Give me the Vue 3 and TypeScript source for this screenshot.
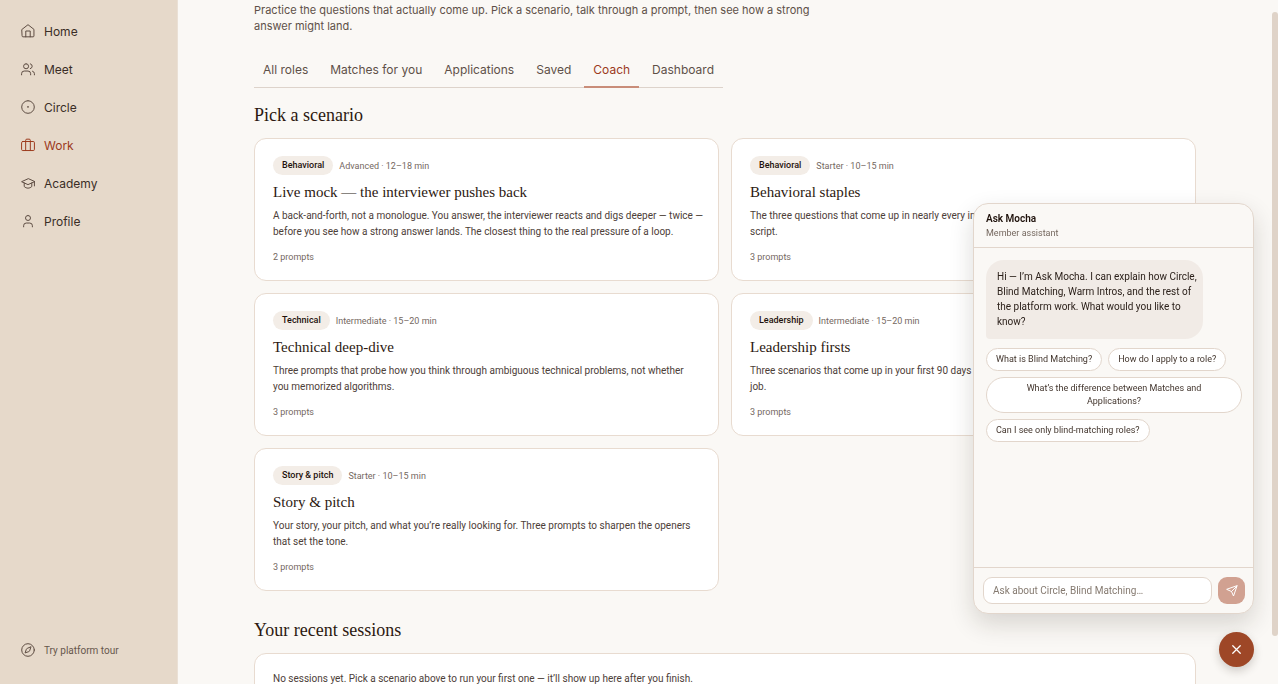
<script setup lang="ts">
import { ref } from 'vue'

interface NavItem { label: string; icon: string }
interface Scenario { category: string; meta: string; title: string; text: string; prompts: string }

const nav: NavItem[] = [
  { label: 'Home', icon: 'M1.800 9.200 12 1.200l10.200 8V20.500a1.500 1.500 0 0 1-1.500 1.500H3.300a1.500 1.500 0 0 1-1.500-1.500zM8.200 22V12h7.600v10' },
  { label: 'Meet', icon: 'M16.500 22v-2a4.500 4.500 0 0 0-4.500-4.500H5.500A4.500 4.500 0 0 0 1 20v2M8.700 3a4.300 4.300 0 1 0 0 8.600a4.300 4.300 0 0 0 0-8.600M23 22v-2a4.500 4.500 0 0 0-3.300-4.300M16 3.100a4.300 4.300 0 0 1 0 8.300' },
  { label: 'Circle', icon: 'M12 1.200a10.800 10.800 0 1 0 0 21.600a10.800 10.800 0 0 0 0-21.600M12 11.300a.7.7 0 1 0 0 1.400a.7.7 0 0 0 0-1.400' },
  { label: 'Work', icon: 'M3 6h18a2 2 0 0 1 2 2v11.500a2 2 0 0 1-2 2H3a2 2 0 0 1-2-2V8a2 2 0 0 1 2-2zM16 21.500V4a2 2 0 0 0-2-2h-4a2 2 0 0 0-2 2v17.500' },
  { label: 'Academy', icon: 'M12 4.800 1 9.800l11 5 11-5zM23 9.800V17M5.500 12v6c2 2 4.200 2.800 6.500 2.800s4.500-.8 6.500-2.800v-6' },
  { label: 'Profile', icon: 'M19.500 22v-2a4.500 4.500 0 0 0-4.500-4.500H9A4.500 4.500 0 0 0 4.500 20v2M12 2.500a4.300 4.300 0 1 0 0 8.600a4.300 4.300 0 0 0 0-8.600' },
]
const tabs: string[] = ['All roles', 'Matches for you', 'Applications', 'Saved', 'Coach', 'Dashboard']
const activeTab = ref('Coach')

const scenarios: Scenario[] = [
  { category: 'Behavioral', meta: 'Advanced · 12–18 min', title: 'Live mock — the interviewer pushes back', text: 'A back-and-forth, not a monologue. You answer, the interviewer reacts and digs deeper — twice —\nbefore you see how a strong answer lands. The closest thing to the real pressure of a loop.', prompts: '2 prompts' },
  { category: 'Behavioral', meta: 'Starter · 10–15 min', title: 'Behavioral staples', text: 'The three questions that come up in nearly every interview. Sound prepared without following a\nscript.', prompts: '3 prompts' },
  { category: 'Technical', meta: 'Intermediate · 15–20 min', title: 'Technical deep-dive', text: 'Three prompts that probe how you think through ambiguous technical problems, not whether\nyou memorized algorithms.', prompts: '3 prompts' },
  { category: 'Leadership', meta: 'Intermediate · 15–20 min', title: 'Leadership firsts', text: 'Three scenarios that come up in your first 90 days managing people in a new leadership\njob.', prompts: '3 prompts' },
  { category: 'Story & pitch', meta: 'Starter · 10–15 min', title: 'Story & pitch', text: 'Your story, your pitch, and what you’re really looking for. Three prompts to sharpen the openers\nthat set the tone.', prompts: '3 prompts' },
]
const greeting = 'Hi — I’m Ask Mocha. I can explain how Circle,\nBlind Matching, Warm Intros, and the rest of\nthe platform work. What would you like to\nknow?'
const suggestions: string[] = [
  'What is Blind Matching?',
  'How do I apply to a role?',
  'What’s the difference between Matches and\nApplications?',
  'Can I see only blind-matching roles?',
]
const question = ref('')
</script>

<template>
  <div class="app">
    <aside class="sidebar">
      <nav class="nav" aria-label="Main">
        <a v-for="item in nav" :key="item.label" href="#" class="nav-link" :class="{ active: item.label === 'Work' }">
          <svg class="icon" viewBox="0 0 24 24" aria-hidden="true"><path :d="item.icon" /></svg>
          <span>{{ item.label }}</span>
        </a>
      </nav>
      <button type="button" class="tour">
        <svg class="icon" viewBox="0 0 24 24" aria-hidden="true">
          <circle cx="12" cy="12" r="10.800" />
          <path d="m17 7-2.200 6.300a2.500 2.500 0 0 1-1.500 1.500L7 17l2.200-6.300a2.500 2.500 0 0 1 1.500-1.500z" />
        </svg>
        <span>Try platform tour</span>
      </button>
    </aside>

    <main class="main">
      <div class="content">
        <p class="intro">Practice the questions that actually come up. Pick a scenario, talk through a prompt, then see how a strong answer might land.</p>
        <div class="tabs" role="tablist">
          <button v-for="tab in tabs" :key="tab" type="button" role="tab" class="tab" :class="{ active: tab === activeTab }" :aria-selected="tab === activeTab" @click="activeTab = tab">{{ tab }}</button>
        </div>
        <h2 class="heading">Pick a scenario</h2>
        <div class="grid">
          <button v-for="s in scenarios" :key="s.title" type="button" class="card">
            <span class="tags"><span class="pill">{{ s.category }}</span><span class="meta">{{ s.meta }}</span></span>
            <span class="title">{{ s.title }}</span>
            <span class="text">{{ s.text }}</span>
            <span class="prompts">{{ s.prompts }}</span>
          </button>
        </div>
        <h2 class="heading recent">Your recent sessions</h2>
        <div class="empty">No sessions yet. Pick a scenario above to run your first one — it’ll show up here after you finish.</div>
      </div>
    </main>

    <section class="chat" aria-label="Ask Mocha">
      <header class="chat-head">
        <strong>Ask Mocha</strong>
        <span>Member assistant</span>
      </header>
      <div class="chat-body">
        <p class="bubble">{{ greeting }}</p>
        <div class="chips">
          <button v-for="s in suggestions" :key="s" type="button" class="chip" :class="{ wide: s.length > 40 }" @click="question = s.replace('\n', ' ')">{{ s }}</button>
        </div>
      </div>
      <form class="chat-form" @submit.prevent>
        <input v-model="question" type="text" aria-label="Your question" placeholder="Ask about Circle, Blind Matching…" />
        <button type="submit" class="send" aria-label="Send">
          <svg viewBox="0 0 24 24" aria-hidden="true"><path d="M22 2 15 22l-4-9-9-4zM22 2 11 13" /></svg>
        </button>
      </form>
    </section>
    <button type="button" class="fab" aria-label="Close assistant">
      <svg viewBox="0 0 24 24" aria-hidden="true"><path d="M18 6 6 18M6 6l12 12" /></svg>
    </button>
    <div class="scroll-thumb" aria-hidden="true"></div>
  </div>
</template>

<style>
body { margin: 0; background: #faf8f5; }
</style>

<style scoped>
.app {
  display: flex;
  height: 100vh;
  overflow: hidden;
  background: #faf8f5;
  color: #2c1810;
  font-family: Roboto, "Liberation Sans", sans-serif;
  font-size: 10px;
}
.app *, .app *::before { box-sizing: border-box; }
button { font: inherit; color: inherit; border: 0; background: none; padding: 0; cursor: pointer; }
svg { display: block; fill: none; stroke: currentColor; stroke-linecap: round; stroke-linejoin: round; flex: none; }

.sidebar {
  flex: none;
  width: 178px;
  display: flex;
  flex-direction: column;
  justify-content: space-between;
  padding: 16px 12px 24px 21px;
  background: #e6d9ca;
  border-right: 1px solid #eae0d5;
}
.nav { display: flex; flex-direction: column; gap: 8px; }
.nav-link {
  display: flex;
  align-items: center;
  gap: 9px;
  height: 30px;
  font-family: Inter, sans-serif;
  font-size: 12px;
  color: #3a2d26;
  text-decoration: none;
}
.icon { width: 14px; height: 14px; stroke-width: 1.700; color: #5c4b41; }
.nav-link.active, .nav-link.active .icon { color: #9c3a1c; }
.tour { display: flex; align-items: center; gap: 9px; height: 20px; color: #66574c; }

.main { flex: 1; min-width: 0; padding: 2px 82px 0 76px; }
.content { max-width: 942px; }
.intro { margin: 0; max-width: 576px; font-family: Inter, sans-serif; font-size: 11px; line-height: 16px; color: #5e5048; }
.tabs { display: flex; width: max-content; gap: 4px; margin-top: 20px; font-family: Inter, sans-serif; border-bottom: 1px solid #ddd3cb; }
.tab { height: 34px; padding: 0 9px 2px; margin-bottom: -1px; font-size: 12px; color: #5e5048; border-bottom: 2px solid transparent; }
.tab.active { color: #9c3a1c; border-bottom-color: #c98d79; }

.heading { margin: 15px 0 11px; font-family: "Liberation Serif", serif; font-weight: 400; font-size: 18px; line-height: 24px; }
.grid { display: grid; grid-template-columns: 1fr 1fr; gap: 12px; }
.card {
  display: flex;
  flex-direction: column;
  align-items: flex-start;
  min-width: 0;
  padding: 17px 10px 16px 18px;
  text-align: left;
  background: #fff;
  border: 1px solid #e8dbd0;
  border-radius: 12px;
}
.tags { display: flex; align-items: center; gap: 6px; font-size: 9px; }
.pill { padding: 0 9px; border-radius: 10px; background: #f3ede7; font-weight: 500; line-height: 19px; color: #1f120c; }
.meta { color: #75685f; }
.title { margin-top: 6px; font-family: "Liberation Serif", serif; font-size: 15px; line-height: 22px; }
.text { margin-top: 5px; line-height: 16px; color: #4d4038; white-space: pre-line; }
.prompts { margin-top: 10px; font-size: 9px; line-height: 14px; color: #75685f; }
.heading.recent { margin-top: 27px; }
.empty { padding: 17px 18px; line-height: 16px; color: #4d4038; background: #fff; border: 1px solid #e8dbd0; border-radius: 12px; }

.chat {
  position: fixed;
  right: 24px;
  bottom: 70px;
  width: 281px;
  height: 411px;
  display: flex;
  flex-direction: column;
  overflow: hidden;
  background: #faf8f5;
  border: 1px solid #e2d6cc;
  border-radius: 15px;
  box-shadow: 0 10px 24px rgba(40, 30, 20, .16);
}
.chat-head { display: flex; flex-direction: column; padding: 8px 12px 7px; line-height: 14px; border-bottom: 1px solid #e2d6cc; color: #1f120c; }
.chat-head strong { font-weight: 600; }
.chat-head span { font-size: 9px; color: #75685f; }
.chat-body { flex: 1; padding: 12px 11px 12px 12px; }
.bubble { width: 217px; margin: 0 0 9px; padding: 9px 2px 10px 11px; line-height: 15px; color: #2c211b; background: #f1ebe6; border-radius: 18px 18px 18px 4px; white-space: pre-line; }
.chips { display: flex; flex-wrap: wrap; gap: 6px; }
.chip { padding: 4px 9px; font-size: 9px; line-height: 13px; color: #43362e; background: #fff; border: 1px solid #e2d6cc; border-radius: 18px; white-space: pre-line; }
.chip.wide { flex-basis: 100%; }
.chat-form { display: flex; gap: 6px; padding: 9px 8px 9px 9px; border-top: 1px solid #e2d6cc; }
.chat-form input { flex: 1; min-width: 0; height: 27px; padding: 0 9px; font: inherit; color: #2c1810; background: #fff; border: 1px solid #e2d6cc; border-radius: 9px; outline: 0; }
.chat-form input::placeholder { color: #857a70; opacity: 1; }
.send { display: grid; place-items: center; width: 27px; height: 27px; color: #fff; background: #d1a191; border-radius: 9px; }
.send svg { width: 12px; height: 12px; stroke-width: 2; }
.fab {
  position: fixed;
  right: 24px;
  bottom: 17px;
  display: grid;
  place-items: center;
  width: 35px;
  height: 35px;
  color: #fff;
  background: #9e4727;
  border-radius: 50%;
  box-shadow: 0 4px 10px rgba(40, 30, 20, .2);
}
.fab svg { width: 15px; height: 15px; stroke-width: 2; }
.scroll-thumb { position: fixed; right: 0; top: 12px; width: 6px; height: 624px; background: #dfd3c8; border-radius: 3px; }
</style>
